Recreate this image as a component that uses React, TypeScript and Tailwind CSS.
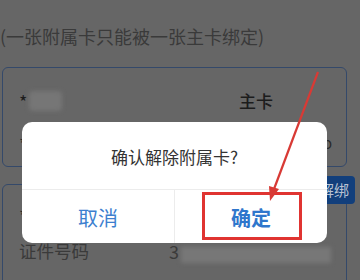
import React from 'react';

const font = { fontFamily: '"Noto Sans CJK SC", "Noto Sans", sans-serif' };

const App: React.FC = () => {
  return (
    <div
      className="relative w-[360px] h-[280px] overflow-hidden bg-[#666666]"
      style={font}
    >
      {/* Page beneath the dim layer */}
      <div className="pt-[23px]">
        <p className="text-[18px] leading-[26px] text-[#3a3a3a] whitespace-nowrap">
          (一张附属卡只能被一张主卡绑定)
        </p>

        {/* Main card */}
        <div className="mt-[18px] ml-[2px] w-[345px] h-[100px] rounded-md border border-[#34496a]">
          <div className="flex items-center h-[44px] mt-[11px] pl-[16px]">
            <span className="text-[18px] text-[#1c1c1c] leading-none">*</span>
            <span className="ml-[2px] w-[33px] h-[20px] rounded bg-[#767676] blur-[2px]" />
            <span className="ml-auto mr-[73px] text-[17px] font-medium text-[#1c1c1c]">主卡</span>
          </div>
          <div className="flex items-center h-[40px] pl-[16px] pr-[14px]">
            <span className="text-[18px] text-[#2a2a2a]">*</span>
            <span className="ml-auto text-[15px] text-[#2a2a2a]">o</span>
          </div>
        </div>

        {/* Sub card */}
        <div className="relative mt-[17px] ml-[2px] w-[345px] h-[120px] rounded-md border border-[#34496a]">
          <span className="absolute right-[-9px] top-[-9px] flex items-center justify-center w-[42px] h-[28px] rounded bg-[#123f7c] text-[15px] text-[#b9c3d3]">
            解绑
          </span>
          <div className="flex items-center h-[40px] mt-[10px] pl-[16px]">
            <span className="text-[18px] text-[#2a2a2a]">*</span>
          </div>
          <div className="flex items-center h-[32px] pl-[16px]">
            <span className="text-[17.5px] text-[#3a3a3a]">证件号码</span>
            <span className="ml-[80px] text-[18px] text-[#3a3a3a]">3</span>
            <span className="ml-[2px] w-[150px] h-[16px] mt-[8px] bg-[#777777] blur-[2px]" />
          </div>
        </div>
      </div>

      {/* Confirm dialog */}
      <div className="absolute left-[22px] top-[122px] w-[305px] h-[121px] rounded-[10px] bg-white flex flex-col overflow-hidden">
        <div className="h-[67px] pt-[2px] flex items-center justify-center text-[17px] text-[#333333]">
          确认解除附属卡?
        </div>
        <div className="flex flex-1 border-t border-[#ececec]">
          <div className="flex-1 pt-[2px] flex items-center justify-center text-[20px] text-[#3d7fcf] border-r border-[#ececec]">
            取消
          </div>
          <div className="flex-1 pt-[2px] flex items-center justify-center text-[20px] font-bold text-[#2f76cc]">
            确定
          </div>
        </div>
      </div>

      {/* Red highlight box */}
      <div className="absolute left-[202px] top-[192px] w-[100px] h-[48px] border-[3px] border-[#e03431]" />

      {/* Red arrow */}
      <svg className="absolute inset-0" width="360" height="280" viewBox="0 0 360 280">
        <line x1="318" y1="72" x2="274" y2="189" stroke="#d83a35" strokeWidth="2.2" />
        <polygon points="270,201 279,189 269,186" fill="#d83a35" />
      </svg>
    </div>
  );
};

export default App;
